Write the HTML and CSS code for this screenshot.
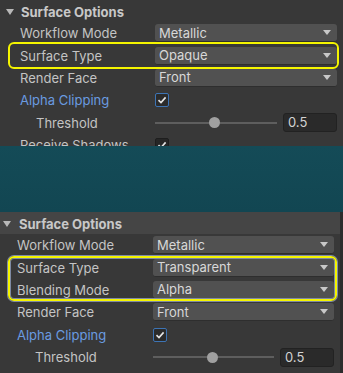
FILE: index.html
```html
<!DOCTYPE html>
<html>
<head>
<meta charset="utf-8">
<link rel="stylesheet" href="styles.css">
</head>
<body>
<div class="shot">
  <section class="panel panel-a">
    <div class="header"><span class="fold"></span><span>Surface Options</span></div>
    <div class="row"><span class="label">Workflow Mode</span><div class="dropdown"><span>Metallic</span><span class="arrow"></span></div></div>
    <div class="hl hl-a">
      <div class="row"><span class="label">Surface Type</span><div class="dropdown"><span>Opaque</span><span class="arrow"></span></div></div>
    </div>
    <div class="row"><span class="label">Render Face</span><div class="dropdown"><span>Front</span><span class="arrow"></span></div></div>
    <div class="row"><span class="label blue">Alpha Clipping</span><div class="ctl"><span class="check focus"><svg viewBox="0 0 10 10" width="10" height="10"><path d="M1.5 5.2 L4 7.6 L8.6 2.4" fill="none" stroke="#e6e6e6" stroke-width="1.6"/></svg></span></div></div>
    <div class="row"><span class="label indent">Threshold</span><div class="ctl slider"><div class="track"><span class="knob" style="left: 49%"></span></div><div class="field">0.5</div></div></div>
    <div class="row"><span class="label">Receive Shadows</span><div class="ctl"><span class="check"><svg viewBox="0 0 10 10" width="10" height="10"><path d="M1.5 5.2 L4 7.6 L8.6 2.4" fill="none" stroke="#e6e6e6" stroke-width="1.6"/></svg></span></div></div>
  </section>
  <div class="gap"></div>
  <section class="panel panel-b">
    <div class="header"><span class="fold"></span><span>Surface Options</span></div>
    <div class="row"><span class="label">Workflow Mode</span><div class="dropdown"><span>Metallic</span><span class="arrow"></span></div></div>
    <div class="hl hl-b">
      <div class="row"><span class="label">Surface Type</span><div class="dropdown"><span>Transparent</span><span class="arrow"></span></div></div>
      <div class="row"><span class="label">Blending Mode</span><div class="dropdown"><span>Alpha</span><span class="arrow"></span></div></div>
    </div>
    <div class="row"><span class="label">Render Face</span><div class="dropdown"><span>Front</span><span class="arrow"></span></div></div>
    <div class="row"><span class="label blue">Alpha Clipping</span><div class="ctl"><span class="check focus"><svg viewBox="0 0 10 10" width="10" height="10"><path d="M1.5 5.2 L4 7.6 L8.6 2.4" fill="none" stroke="#e6e6e6" stroke-width="1.6"/></svg></span></div></div>
    <div class="row"><span class="label indent">Threshold</span><div class="ctl slider"><div class="track"><span class="knob" style="left: 49%"></span></div><div class="field">0.5</div></div></div>
    <div class="row"><span class="label">Receive Shadows</span><div class="ctl"><span class="check"><svg viewBox="0 0 10 10" width="10" height="10"><path d="M1.5 5.2 L4 7.6 L8.6 2.4" fill="none" stroke="#e6e6e6" stroke-width="1.6"/></svg></span></div></div>
    <div class="scrollbar"></div>
  </section>
</div>
</body>
</html>
```

FILE: styles.css
```css
* { box-sizing: border-box; }
html, body { margin: 0; padding: 0; }
body {
  width: 343px;
  height: 373px;
  overflow: hidden;
  background: #383838;
  font-family: Inter, "Noto Sans", sans-serif;
  font-size: 13px;
  color: #c4c4c4;
}
.shot { display: flex; flex-direction: column; }
.panel { background: #383838; overflow: hidden; position: relative; }
.panel-a { height: 146px; }
.panel-b { height: 161px; }
.gap { height: 66px; background: linear-gradient(180deg, #144b57 0%, #124652 100%); }

.header {
  height: 22px;
  display: flex;
  align-items: center;
  font-weight: 700;
  color: #c8c8c8;
}
.panel-a .header { padding-left: 6px; padding-top: 1px; }
.panel-b .header { padding-left: 3px; background: #454545; padding-top: 1px; }
.fold {
  width: 0; height: 0;
  border-left: 4px solid transparent;
  border-right: 4px solid transparent;
  border-top: 6px solid #b8b8b8;
  margin-right: 7px;
}
.panel-b .fold { margin-right: 8px; }

.row {
  height: 22.4px;
  display: grid;
  align-items: center;
}
.panel-a .row { grid-template-columns: 135px 1fr; padding: 0 6px 0 20px; }
.panel-b .row { grid-template-columns: 136px 1fr; padding: 0 9px 0 17px; }

.label { white-space: nowrap; }
.label.blue { color: #6a9be0; }
.panel-a .label.indent { padding-left: 16px; }
.panel-b .label.indent { padding-left: 18px; }

.hl { position: relative; }
.hl::after {
  content: "";
  position: absolute;
  border: 2px solid #f5f500;
  border-radius: 6px;
  pointer-events: none;
}
.hl-a { margin: 0 6px 0 10px; }
.hl-a::after { inset: -2px; }
.panel-a .hl-a .row { padding: 0 0 0 10px; }
.hl-b { margin: 0 6px 0 8px; }
.hl-b::after {
  inset: 0;
  box-shadow: 0 0 0 1px #7e8aa4, inset 0 0 0 1px #7e8aa4;
}
.panel-b .hl-b .row { padding: 0 3px 0 9px; }

.dropdown {
  height: 18px;
  background: #515151;
  border-radius: 3px;
  border-bottom: 1px solid #2e2e2e;
  display: flex;
  align-items: center;
  justify-content: space-between;
  padding: 0 6px 0 4px;
  color: #d8d8d8;
}
.arrow {
  width: 0; height: 0;
  border-left: 4px solid transparent;
  border-right: 4px solid transparent;
  border-top: 5px solid #c8c8c8;
}

.ctl { display: flex; align-items: center; }
.check {
  width: 14px; height: 14px;
  border-radius: 2px;
  background: #262626;
  border: 1px solid #1e1e1e;
  display: flex;
  align-items: center;
  justify-content: center;
}
.check.focus { border-color: #3d74b4; background: #2b2b2b; }

.slider { gap: 6px; }
.track {
  flex: 1;
  height: 2px;
  background: #5e5e5e;
  position: relative;
}
.knob {
  position: absolute;
  top: 50%;
  width: 11px; height: 11px;
  margin: -5.5px 0 0 -5.5px;
  border-radius: 50%;
  background: #a0a0a0;
}
.field {
  width: 54px;
  height: 19px;
  background: #2a2a2a;
  border: 1px solid #222;
  border-radius: 3px;
  padding-left: 4px;
  line-height: 17px;
  color: #d2d2d2;
}
.scrollbar {
  position: absolute;
  right: 0; top: 0; bottom: 0;
  width: 3px;
  background: #2c2c2c;
}
```
